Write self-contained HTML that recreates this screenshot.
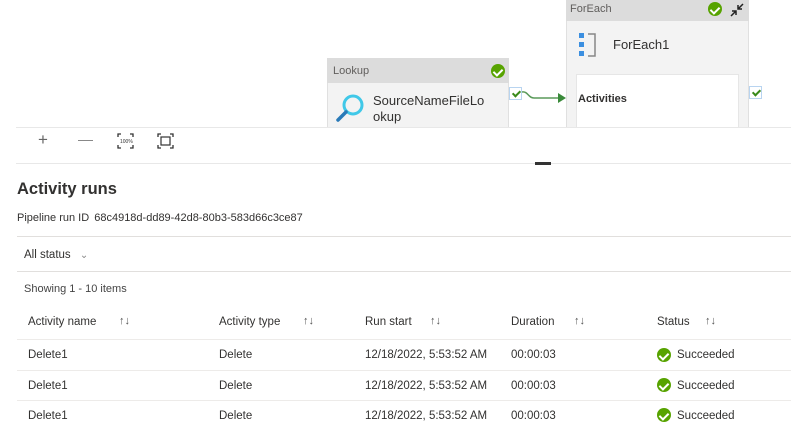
<!DOCTYPE html>
<html><head><meta charset="utf-8"><style>
*{margin:0;padding:0;box-sizing:border-box}
body{width:791px;height:441px;overflow:hidden;background:#fff;font-family:"Liberation Sans",sans-serif;color:#323130;position:relative}
.a{position:absolute;white-space:nowrap}
.hl{position:absolute;height:1px;background:#e1dfdd}
.chk{position:absolute;width:14px;height:14px;border-radius:50%;background:#57a300}
.chk:after{content:"";position:absolute;left:4px;top:2.5px;width:4px;height:7px;border:solid #fff;border-width:0 2px 2px 0;transform:rotate(45deg)}
.sq{position:absolute;width:13px;height:13px;border:1px solid #b8d4f0;background:#fff}
.sq:after{content:"";position:absolute;left:3.5px;top:1px;width:3px;height:6px;border:solid #3a8a1a;border-width:0 2px 2px 0;transform:rotate(45deg)}
.th{font-size:11.5px;color:#323130}
.td{font-size:11.5px;color:#323130}
.sort{font-size:11px;color:#555}
</style></head><body>
<!-- Lookup -->
<div class="a" style="left:327px;top:58px;width:182px;height:70px;background:#f3f3f3;border:1px solid #e0e0e0"></div>
<div class="a" style="left:327px;top:58px;width:182px;height:25px;background:#dcdcdc"></div>
<div class="a" style="left:333px;top:65px;font-size:11px;color:#605e5c">Lookup</div>
<div class="chk" style="left:491px;top:64px"></div>
<svg class="a" style="left:334px;top:92px" width="32" height="32"><circle cx="19" cy="13" r="9" fill="none" stroke="#40c8e8" stroke-width="3"/><line x1="12" y1="20" x2="4" y2="28" stroke="#2a7ab8" stroke-width="3.5" stroke-linecap="round"/></svg>
<div class="a" style="left:373px;top:93px;font-size:13px;line-height:16px;color:#323130">SourceNameFileLo<br>okup</div>
<div class="sq" style="left:509px;top:87px"></div>
<svg class="a" style="left:522px;top:88px" width="46" height="16"><path d="M0 4 C6 3 6 10 12 10 L36 10" fill="none" stroke="#5a9a5a" stroke-width="1.5"/><path d="M36 5 L44 10 L36 15Z" fill="#3a8a3a"/></svg>
<!-- ForEach -->
<div class="a" style="left:566px;top:0;width:183px;height:128px;background:#f3f3f3;border:1px solid #e0e0e0"></div>
<div class="a" style="left:566px;top:0;width:183px;height:21px;background:#dcdcdc"></div>
<div class="a" style="left:570px;top:3px;font-size:11px;color:#605e5c">ForEach</div>
<div class="chk" style="left:708px;top:2px"></div>
<svg class="a" style="left:728px;top:1px" width="18" height="18"><path d="M3 15 L8 10 M4 10 H8 V14 M15 3 L10 8 M10 4 V8 H14" fill="none" stroke="#222" stroke-width="1.5"/></svg>
<svg class="a" style="left:578px;top:32px" width="20" height="26"><rect x="1" y="1" width="5" height="5" fill="#3b8fe0"/><rect x="1" y="10" width="5" height="5" fill="#3b8fe0"/><rect x="1" y="19" width="5" height="5" fill="#3b8fe0"/><path d="M10 2 H17 V24 H10" fill="none" stroke="#888" stroke-width="1.5"/></svg>
<div class="a" style="left:613px;top:37px;font-size:13px">ForEach1</div>
<div class="a" style="left:576px;top:74px;width:163px;height:54px;background:#fff;border:1px solid #e6e6e6"></div>
<div class="a" style="left:578px;top:93px;font-size:11px;font-weight:bold">Activities</div>
<div class="sq" style="left:749px;top:86px"></div>
<!-- toolbar -->
<div class="hl" style="left:16px;top:127px;width:775px;background:#e8e8e8"></div>
<div class="a" style="left:16px;top:128px;width:775px;height:35px;background:#fff"></div>
<div class="a" style="left:38px;top:130px;font-size:17px;color:#666">+</div>
<div class="a" style="left:78px;top:140px;width:15px;height:1px;background:#888"></div>
<svg class="a" style="left:117px;top:133px" width="17" height="16"><path d="M1 4V1H4M13 1H16V4M16 12V15H13M4 15H1V12" fill="none" stroke="#333" stroke-width="1.3"/><text x="3" y="10" font-size="5" font-family="Liberation Sans" fill="#333">100%</text></svg>
<svg class="a" style="left:157px;top:133px" width="17" height="16"><path d="M1 4V1H4M13 1H16V4M16 12V15H13M4 15H1V12" fill="none" stroke="#333" stroke-width="1.3"/><rect x="4" y="4" width="9" height="8" fill="none" stroke="#333" stroke-width="1.2"/></svg>
<div class="hl" style="left:16px;top:163px;width:775px;background:#e8e8e8"></div>
<div class="a" style="left:535px;top:162px;width:16px;height:3px;background:#333"></div>
<!-- activity runs -->
<div class="a" style="left:17px;top:180px;font-size:16.5px;font-weight:600">Activity runs</div>
<div class="a" style="left:17px;top:212px;font-size:11px">Pipeline run ID <span style="margin-left:2px">68c4918d-dd89-42d8-80b3-583d66c3ce87</span></div>
<div class="hl" style="left:17px;top:236px;width:774px"></div>
<div class="a" style="left:24px;top:249px;font-size:11.5px">All status <span style="color:#888;font-size:10px;margin-left:6px">&#8964;</span></div>
<div class="hl" style="left:17px;top:271px;width:774px"></div>
<div class="a" style="left:24px;top:283px;font-size:11px;color:#444">Showing 1 - 10 items</div>
<div class="a th" style="left:28px;top:316px">Activity name</div><div class="a sort" style="left:119px;top:315px">↑↓</div>
<div class="a th" style="left:219px;top:316px">Activity type</div><div class="a sort" style="left:303px;top:315px">↑↓</div>
<div class="a th" style="left:365px;top:316px">Run start</div><div class="a sort" style="left:430px;top:315px">↑↓</div>
<div class="a th" style="left:511px;top:316px">Duration</div><div class="a sort" style="left:574px;top:315px">↑↓</div>
<div class="a th" style="left:657px;top:316px">Status</div><div class="a sort" style="left:705px;top:315px">↑↓</div>
<div class="hl" style="left:17px;top:339px;width:774px;background:#edebe9"></div>
<div class="hl" style="left:17px;top:370px;width:774px;background:#edebe9"></div>
<div class="hl" style="left:17px;top:400px;width:774px;background:#edebe9"></div>
<div class="a td" style="left:28px;top:349px">Delete1</div><div class="a td" style="left:219px;top:349px">Delete</div><div class="a td" style="left:365px;top:349px">12/18/2022, 5:53:52 AM</div><div class="a td" style="left:511px;top:349px">00:00:03</div><div class="chk" style="left:657px;top:348px"></div><div class="a td" style="left:677px;top:349px">Succeeded</div>
<div class="a td" style="left:28px;top:380px">Delete1</div><div class="a td" style="left:219px;top:380px">Delete</div><div class="a td" style="left:365px;top:380px">12/18/2022, 5:53:52 AM</div><div class="a td" style="left:511px;top:380px">00:00:03</div><div class="chk" style="left:657px;top:378px"></div><div class="a td" style="left:677px;top:380px">Succeeded</div>
<div class="a td" style="left:28px;top:410px">Delete1</div><div class="a td" style="left:219px;top:410px">Delete</div><div class="a td" style="left:365px;top:410px">12/18/2022, 5:53:52 AM</div><div class="a td" style="left:511px;top:410px">00:00:03</div><div class="chk" style="left:657px;top:408px"></div><div class="a td" style="left:677px;top:410px">Succeeded</div>
</body></html>
